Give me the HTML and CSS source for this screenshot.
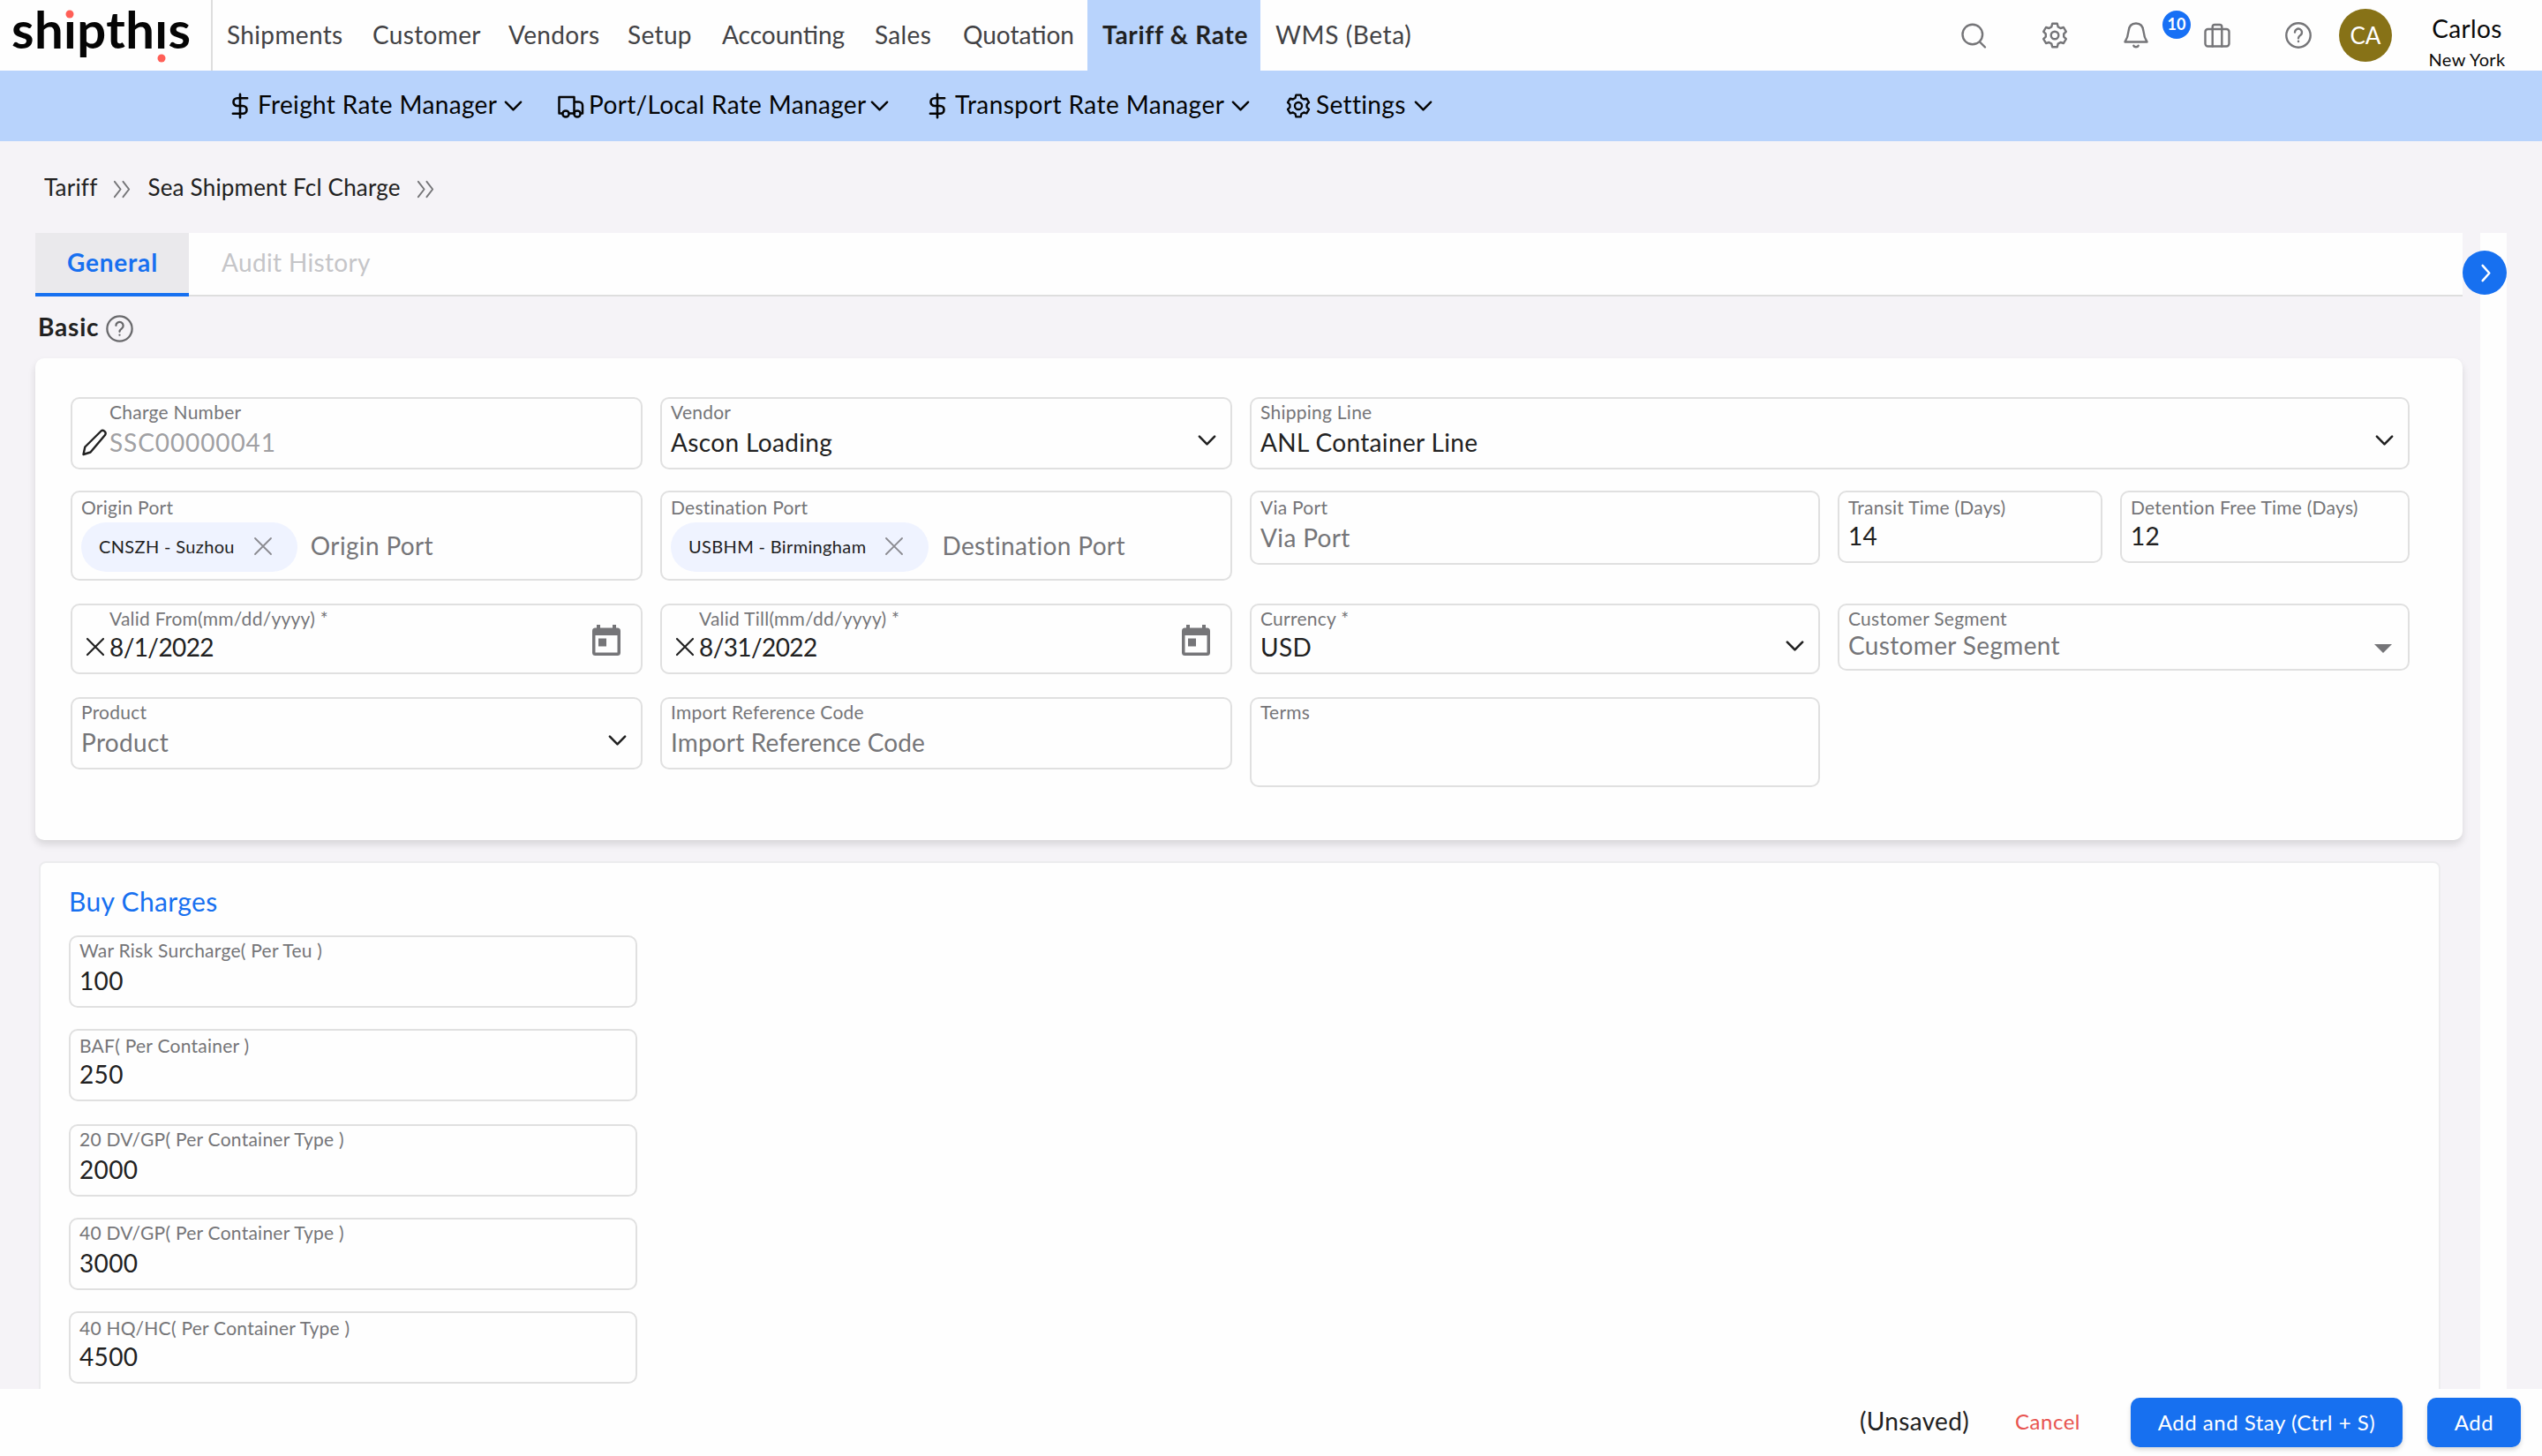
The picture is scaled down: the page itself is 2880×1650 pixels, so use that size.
FILE: index.html
```
<!DOCTYPE html>
<html lang="en">
<head>
    <meta charset="UTF-8">
    <meta name="viewport" content="width=device-width, initial-scale=1.0">
    <title>Sea Shipment Fcl Charge</title>
    <link rel="stylesheet" href="styles.css">
</head>
<body>
    <!-- shared icons -->
    <svg class="sprite">
        <symbol id="chevron" viewBox="0 0 24 24"><path d="M3 7l9 9 9-9"/></symbol>
        <symbol id="double" viewBox="0 0 24 24"><path d="M3 3l7 9-7 9M13 3l7 9-7 9"/></symbol>
        <symbol id="close" viewBox="0 0 24 24"><path d="M3 3l18 18M21 3L3 21"/></symbol>
        <symbol id="dollar" viewBox="0 0 24 24"><path d="M12 1.500v21M18.500 5H9.500a3.500 3.500 0 0 0 0 7h5a3.500 3.500 0 0 1 0 7H5.500"/></symbol>
        <symbol id="gear" viewBox="-16 -16 32 32">
            <path d="M-2.800 -13.200L2.800 -13.200L3.700 -9.600L6.500 -8L10 -9L12.800 -4.200L10.200 -1.600L10.200 1.600L12.800 4.200L10 9L6.500 8L3.700 9.600L2.800 13.200L-2.800 13.200L-3.700 9.600L-6.500 8L-10 9L-12.800 4.200L-10.200 1.600L-10.200 -1.600L-12.800 -4.200L-10 -9L-6.500 -8L-3.700 -9.600Z"/>
            <circle cx="0" cy="0" r="4.300"/>
        </symbol>
        <symbol id="help" viewBox="0 0 32 32">
            <circle cx="16" cy="16" r="13.700"/>
            <path d="M12 12.500a4 4 0 1 1 6.500 3.200c-1.600 1.200-2.500 1.800-2.500 3.500"/>
            <path d="M16 22.800v.2"/>
        </symbol>
        <symbol id="calendar" viewBox="0 0 32 35">
            <path d="M28.500 3.500H27V0h-4v3.500H9V0H5v3.500H3.500A3.500 3.500 0 0 0 0 7v24.500A3.500 3.500 0 0 0 3.500 35h25a3.500 3.500 0 0 0 3.500-3.500V7a3.500 3.500 0 0 0-3.500-3.500zm0 28h-25v-19.500h25zM7 15.500h9v9H7z"/>
        </symbol>
    </svg>

    <header class="topbar">
        <a class="logo" href="#">
            <svg width="230" height="80" viewBox="0 0 230 80">
                <text x="13" y="55" textLength="203">shıpthıs</text>
                <circle cx="79" cy="16" r="4.500"/>
                <circle cx="183" cy="66" r="4.500"/>
            </svg>
        </a>
        <nav class="main-nav">
            <a href="#">Shipments</a>
            <a href="#">Customer</a>
            <a href="#">Vendors</a>
            <a href="#">Setup</a>
            <a href="#">Accounting</a>
            <a href="#">Sales</a>
            <a href="#">Quotation</a>
            <a href="#" class="active">Tariff &amp; Rate</a>
            <a href="#">WMS (Beta)</a>
        </nav>
        <div class="tools">
            <svg class="tool" viewBox="0 0 32 32"><circle cx="14.800" cy="15" r="11.300"/><path d="M23 23.500l6 6"/></svg>
            <svg class="tool"><use href="#gear"/></svg>
            <div class="bell">
                <svg class="tool" viewBox="0 0 32 32"><path d="M16 2.500c-5 0-8 3.500-8.500 9-.5 5.500-1.500 8-4 12h25c-2.500-4-3.500-6.500-4-12C24 6 21 2.500 16 2.500zM13.300 27.800a2.800 2 0 0 0 5.400 0"/></svg>
                <span class="badge">10</span>
            </div>
            <svg class="tool" viewBox="0 0 32 32"><rect x="2.500" y="9" width="27" height="19.500" rx="3"/><path d="M10.700 28.500V6.500a2.500 2.500 0 0 1 2.500-2.500h5.600a2.500 2.500 0 0 1 2.500 2.500v22"/></svg>
            <svg class="tool"><use href="#help"/></svg>
        </div>
        <div class="avatar">CA</div>
        <div class="user">
            <span class="user-name">Carlos</span>
            <span class="user-city">New York</span>
        </div>
    </header>

    <nav class="sub-nav">
        <a href="#"><svg class="icon thin"><use href="#dollar"/></svg><span>Freight Rate Manager</span><svg class="caret"><use href="#chevron"/></svg></a>
        <a href="#"><svg class="icon" viewBox="0 0 30 30"><path d="M5 23.500H1.500V5h17v18.500H13M18.500 10.500h5.500a4 4 0 0 1 4 4v9h-2M19 23.500h-1"/><circle cx="9" cy="24" r="3.600"/><circle cx="22" cy="24" r="3.600"/></svg><span>Port/Local Rate Manager</span><svg class="caret"><use href="#chevron"/></svg></a>
        <a href="#"><svg class="icon thin"><use href="#dollar"/></svg><span>Transport Rate Manager</span><svg class="caret"><use href="#chevron"/></svg></a>
        <a href="#"><svg class="icon"><use href="#gear"/></svg><span>Settings</span><svg class="caret"><use href="#chevron"/></svg></a>
    </nav>

    <main class="page">
        <div class="breadcrumb">
            <a href="#">Tariff</a>
            <svg><use href="#double"/></svg>
            <a href="#">Sea Shipment Fcl Charge</a>
            <svg><use href="#double"/></svg>
        </div>

        <div class="columns">
            <div class="content">
                <div class="tabs">
                    <div class="tab active">General</div>
                    <div class="tab">Audit History</div>
                </div>

                <h2 class="section-title"><span>Basic</span><svg><use href="#help"/></svg></h2>

                <section class="card basic">
                    <div class="field">
                        <svg class="prefix" viewBox="0 0 32 32"><path d="M22.500 3.500c2-2 6.500 1 4.700 4.300L10.500 27.500l-8 2.500 1.800-8.500z"/></svg>
                        <div class="body"><label>Charge Number</label><p class="disabled">SSC00000041</p></div>
                    </div>
                    <div class="field">
                        <div class="body"><label>Vendor</label><p>Ascon Loading</p></div>
                        <svg class="suffix"><use href="#chevron"/></svg>
                    </div>
                    <div class="field wide">
                        <div class="body"><label>Shipping Line</label><p>ANL Container Line</p></div>
                        <svg class="suffix"><use href="#chevron"/></svg>
                    </div>

                    <div class="field low tall">
                        <div class="body">
                            <label>Origin Port</label>
                            <div class="chips"><span class="chip"><span>CNSZH - Suzhou</span><svg><use href="#close"/></svg></span><p class="empty">Origin Port</p></div>
                        </div>
                    </div>
                    <div class="field low tall">
                        <div class="body">
                            <label>Destination Port</label>
                            <div class="chips"><span class="chip"><span>USBHM - Birmingham</span><svg><use href="#close"/></svg></span><p class="empty">Destination Port</p></div>
                        </div>
                    </div>
                    <div class="field low via">
                        <div class="body"><label>Via Port</label><p class="empty">Via Port</p></div>
                    </div>
                    <div class="pair">
                        <div class="field low">
                            <div class="body"><label>Transit Time (Days)</label><p>14</p></div>
                        </div>
                        <div class="field low">
                            <div class="body"><label>Detention Free Time (Days)</label><p>12</p></div>
                        </div>
                    </div>

                    <div class="field short">
                        <svg class="prefix cross"><use href="#close"/></svg>
                        <div class="body"><label>Valid From(mm/dd/yyyy) *</label><p class="date">8/1/2022</p></div>
                        <svg class="calendar"><use href="#calendar"/></svg>
                    </div>
                    <div class="field short">
                        <svg class="prefix cross"><use href="#close"/></svg>
                        <div class="body"><label>Valid Till(mm/dd/yyyy) *</label><p class="date">8/31/2022</p></div>
                        <svg class="calendar"><use href="#calendar"/></svg>
                    </div>
                    <div class="field short">
                        <div class="body"><label>Currency *</label><p>USD</p></div>
                        <svg class="suffix"><use href="#chevron"/></svg>
                    </div>
                    <div class="field short segment">
                        <div class="body"><label>Customer Segment</label><p class="empty">Customer Segment</p></div>
                        <span class="triangle"></span>
                    </div>

                    <div class="field">
                        <div class="body"><label>Product</label><p class="empty">Product</p></div>
                        <svg class="suffix"><use href="#chevron"/></svg>
                    </div>
                    <div class="field">
                        <div class="body"><label>Import Reference Code</label><p class="empty code">Import Reference Code</p></div>
                    </div>
                    <div class="field tall">
                        <div class="body"><label>Terms</label></div>
                    </div>
                </section>

                <section class="card charges">
                    <h3>Buy Charges</h3>
                    <div class="field">
                        <div class="body"><label>War Risk Surcharge( Per Teu )</label><p>100</p></div>
                    </div>
                    <div class="field low">
                        <div class="body"><label>BAF( Per Container )</label><p>250</p></div>
                    </div>
                    <div class="field spaced">
                        <div class="body"><label>20 DV/GP( Per Container Type )</label><p>2000</p></div>
                    </div>
                    <div class="field">
                        <div class="body"><label>40 DV/GP( Per Container Type )</label><p>3000</p></div>
                    </div>
                    <div class="field low">
                        <div class="body"><label>40 HQ/HC( Per Container Type )</label><p>4500</p></div>
                    </div>
                </section>
            </div>

            <aside class="rail">
                <button class="expand"><svg viewBox="0 0 24 24"><path d="M8 3l8 9-8 9"/></svg></button>
            </aside>
        </div>
    </main>

    <footer class="actions">
        <span class="status">(Unsaved)</span>
        <a class="cancel" href="#">Cancel</a>
        <button class="btn btn-stay">Add and Stay (Ctrl + S)</button>
        <button class="btn btn-add">Add</button>
    </footer>
</body>
</html>
```
FILE: styles.css
```
* {
    margin: 0;
    padding: 0;
    box-sizing: border-box;
}
body {
    height: 1650px;
    display: flex;
    flex-direction: column;
    overflow: hidden;
    background: #f5f3f7;
    font-family: Lato, "Open Sans", sans-serif;
    font-size: 28px;
    letter-spacing: 0.35px;
    color: #212121;
}
a {
    color: inherit;
    text-decoration: none;
}
svg {
    fill: none;
    stroke: currentColor;
    stroke-linecap: round;
    stroke-linejoin: round;
    flex: none;
}
.sprite {
    display: none;
}

/* top bar */
.topbar {
    display: flex;
    height: 80px;
    flex: none;
    background: #fefefe;
}
.logo {
    width: 241px;
    border-right: 2px solid #dedede;
}
.logo svg {
    display: block;
    overflow: visible;
    fill: #050505;
    stroke: none;
}
.logo text {
    font-size: 58px;
    font-weight: bold;
    letter-spacing: 0;
}
.logo circle {
    fill: #ff5f57;
}
.main-nav {
    display: flex;
    flex: 1;
    color: #424245;
}
.main-nav a {
    padding-left: 16px;
    line-height: 79px;
    white-space: nowrap;
}
.main-nav a:nth-child(1) { width: 165px; }
.main-nav a:nth-child(2) { width: 154px; }
.main-nav a:nth-child(3) { width: 135px; }
.main-nav a:nth-child(4) { width: 107px; }
.main-nav a:nth-child(5) { width: 173px; letter-spacing: 0; }
.main-nav a:nth-child(6) { width: 100px; }
.main-nav a:nth-child(7) { width: 157px; letter-spacing: 0; }
.main-nav a:nth-child(8) { width: 196px; }
.main-nav a:nth-child(9) { padding-left: 17px; letter-spacing: 0.6px; }
.main-nav a.active {
    padding-left: 17px;
    background: #b8d3fc;
    color: #212121;
    font-weight: bold;
    letter-spacing: 0.7px;
}
.tools {
    display: flex;
    align-items: center;
    gap: 60px;
    margin-right: 30px;
    color: #757578;
}
.tool {
    display: block;
    width: 32px;
    height: 32px;
    stroke-width: 2.4;
}
.bell {
    position: relative;
}
.badge {
    position: absolute;
    left: 46px;
    top: -12px;
    width: 32px;
    height: 32px;
    border-radius: 50%;
    background: #1770f5;
    color: #fff;
    font-size: 18px;
    font-weight: bold;
    line-height: 31px;
    letter-spacing: 0;
    text-align: center;
}
.avatar {
    width: 60px;
    height: 60px;
    margin-top: 10px;
    border-radius: 50%;
    background: #877217;
    color: #fff;
    font-size: 26px;
    letter-spacing: 0;
    line-height: 61px;
    text-align: center;
}
.user {
    display: flex;
    flex-direction: column;
    align-items: center;
    gap: 4px;
    width: 170px;
    padding-top: 14px;
    color: #0a0a0a;
    line-height: 36px;
}
.user-city {
    font-size: 20px;
    line-height: 26px;
}

/* second level menu */
.sub-nav {
    display: flex;
    gap: 39px;
    height: 80px;
    flex: none;
    padding-left: 257px;
    background: #b8d3fc;
    color: #050505;
}
.sub-nav a {
    display: flex;
    align-items: center;
    white-space: nowrap;
}
.sub-nav a:nth-child(1) { width: 336px; }
.sub-nav a:nth-child(2) { width: 376px; }
.sub-nav a:nth-child(3) { width: 370px; letter-spacing: 0.45px; }
.sub-nav a:nth-child(4) { width: 168px; }
.sub-nav span {
    flex: 1;
    padding: 0 0 5px 5px;
}
.sub-nav .icon {
    width: 30px;
    height: 30px;
    stroke-width: 2.5;
}
.sub-nav .icon.thin {
    stroke-width: 2.1;
}
.caret {
    width: 23px;
    height: 23px;
    stroke-width: 2.6;
}

/* page */
.page {
    flex: 1;
    min-height: 0;
    display: flex;
    flex-direction: column;
    overflow: hidden;
    padding-left: 40px;
}
.breadcrumb {
    display: flex;
    align-items: center;
    height: 104px;
    flex: none;
    padding-left: 10px;
    font-size: 26px;
    letter-spacing: 0.2px;
}
.breadcrumb svg {
    width: 23px;
    height: 23px;
    margin: 4px 17px 0;
    color: #757578;
    stroke-width: 2;
}
.columns {
    display: flex;
    gap: 20px;
    flex: 1;
    min-height: 0;
}
.content {
    width: 2750px;
}
.tabs {
    display: flex;
    height: 72px;
    background: #fefefe;
    border-bottom: 2px solid #dedede;
}
.tab {
    height: 72px;
    padding-left: 37px;
    line-height: 67px;
    color: #c5c5c8;
}
.tab.active {
    width: 174px;
    padding-left: 36px;
    background: #eae9ec;
    border-bottom: 4px solid #1770f0;
    color: #1770f0;
    font-weight: bold;
    letter-spacing: 0.8px;
}
.section-title {
    display: flex;
    align-items: center;
    height: 70px;
    padding: 2px 0 0 3px;
    font-size: 28px;
    letter-spacing: 0.8px;
}
.section-title span {
    padding-bottom: 5px;
}
.section-title svg {
    width: 33px;
    height: 33px;
    margin-left: 7px;
    color: #69696c;
    stroke-width: 2.2;
}
.card {
    background: #fefefe;
}
.basic {
    display: grid;
    grid-template-columns: 648px 648px 646px 648px;
    grid-template-rows: 80px 102px 80px 102px;
    gap: 26px 20px;
    height: 546px;
    padding: 44px 0 0 40px;
    border-radius: 10px;
    box-shadow: 0 5px 8px rgba(0, 0, 0, 0.12);
}

/* form field */
.field {
    display: flex;
    align-items: flex-start;
    height: 82px;
    padding: 2px 0 0 10px;
    border: 2px solid #e0e0e0;
    border-radius: 10px;
}
.field .body {
    flex: 1;
}
.field label {
    display: block;
    margin-bottom: 3px;
    color: #757578;
    font-size: 21px;
    line-height: 26px;
    letter-spacing: 0.25px;
}
.field p {
    line-height: 36px;
}
.field .disabled {
    color: #a0a0a3;
    letter-spacing: 0.9px;
}
.field .date {
    letter-spacing: -0.6px;
}
.field .empty {
    color: #757578;
}
.field .code {
    letter-spacing: 0.15px;
}
.field.low {
    padding-top: 4px;
}
.field.low label {
    margin-bottom: 1px;
}
.field.via {
    height: 84px;
}
.field.via label {
    margin-bottom: 3px;
}
.field.tall {
    height: 102px;
}
.field.short {
    height: 80px;
}
.field.short label {
    margin-bottom: 1px;
}
.field.segment {
    height: 76px;
}
.field.segment label {
    margin-bottom: -1px;
}
.wide {
    grid-column: span 2;
}
.pair {
    display: grid;
    grid-template-columns: 300px 328px;
    gap: 20px;
}
.prefix {
    width: 32px;
    height: 32px;
    margin-top: 31px;
    stroke-width: 2.4;
}
.prefix.cross {
    width: 24px;
    height: 24px;
    margin: 33px 4px 0;
    stroke-width: 2.2;
}
.suffix {
    width: 23px;
    height: 23px;
    margin: 34px 15px 0 0;
    stroke-width: 2.7;
}
.short .suffix {
    margin-top: 33px;
}
.calendar {
    width: 32px;
    height: 35px;
    margin: 20px 23px 0 0;
    fill: #757578;
    fill-rule: evenodd;
    stroke: none;
}
.triangle {
    margin: 42px 18px 0 0;
    border: 10px solid transparent;
    border-top-color: #757578;
    border-bottom: 0;
}
.chips {
    display: flex;
    margin-top: 4px;
}
.chips p {
    padding: 8px 0 0 15px;
}
.chip {
    display: flex;
    align-items: center;
    height: 56px;
    padding: 0 27px 0 20px;
    border-radius: 28px;
    background: #eff3ff;
    font-size: 20px;
    letter-spacing: 0.35px;
}
.chip span {
    padding-bottom: 3px;
}
.chip svg {
    width: 24px;
    height: 24px;
    margin: 0 0 3px 20px;
    color: #8a8a90;
    stroke-width: 1.8;
}

/* charges */
.charges {
    display: flex;
    flex-direction: column;
    gap: 24px;
    width: 2721px;
    height: 700px;
    margin: 24px 0 0 4px;
    padding: 22px 0 0 32px;
    border: 2px solid #ececee;
    border-radius: 8px;
}
.charges h3 {
    margin-bottom: -7px;
    color: #1770f0;
    font-size: 30px;
    font-weight: normal;
    line-height: 43px;
}
.charges .field {
    width: 644px;
    flex: none;
}
.charges .spaced {
    margin-top: 2px;
}

.rail {
    position: relative;
    width: 30px;
    background: #fefefe;
}
.expand {
    position: absolute;
    left: -20px;
    top: 20px;
    display: flex;
    align-items: center;
    justify-content: center;
    width: 50px;
    height: 50px;
    border: 0;
    border-radius: 50%;
    background: #1770f0;
    color: #fff;
}
.expand svg {
    width: 23px;
    height: 23px;
    margin-left: 2px;
    stroke-width: 2.6;
}

/* bottom actions */
.actions {
    display: flex;
    align-items: flex-start;
    justify-content: flex-end;
    height: 76px;
    flex: none;
    padding: 10px 24px 0 0;
    background: #fefefe;
    line-height: 54px;
}
.status {
    line-height: 52px;
}
.cancel {
    margin: 0 57px 0 52px;
    color: #e85450;
    font-size: 24px;
    letter-spacing: 0.5px;
    line-height: 53px;
}
.btn {
    height: 56px;
    padding-bottom: 2px;
    border: 0;
    border-radius: 10px;
    background: #1770f0;
    box-shadow: 0 3px 5px rgba(0, 0, 0, 0.15);
    color: #fff;
    font-family: inherit;
    font-size: 24px;
    letter-spacing: 0.5px;
}
.btn-stay {
    width: 308px;
    margin-right: 28px;
}
.btn-add {
    width: 106px;
}
```
